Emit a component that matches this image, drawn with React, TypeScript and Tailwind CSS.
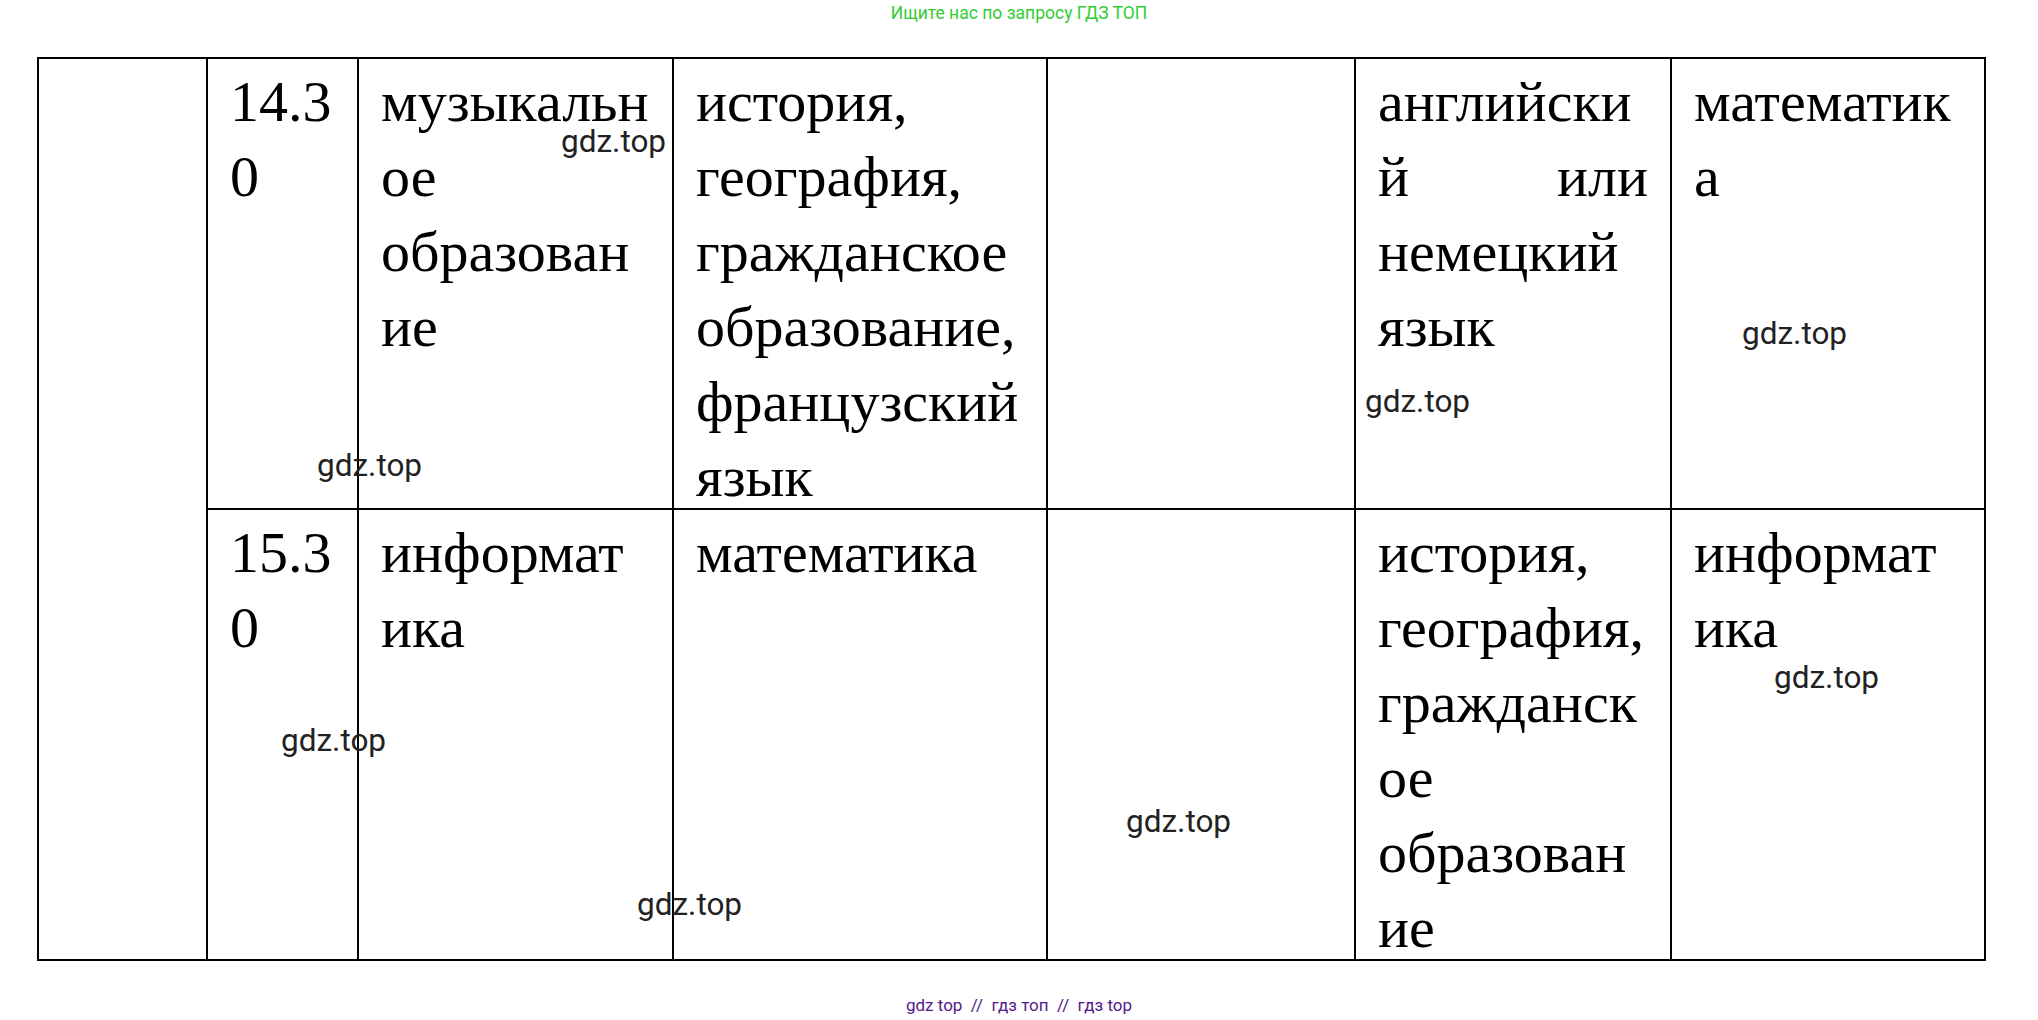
import React from "react";

const td =
  "border-2 border-black align-top px-[22px] pt-[5px] pb-0 text-justify [overflow-wrap:anywhere]";

const wm =
  "absolute text-[31.5px] leading-[31px] text-[#222] font-['Roboto',sans-serif] pointer-events-none";

function Cell({ children }: { children?: React.ReactNode }) {
  return (
    <td className={td}>
      <div className="-mb-[6px]">{children}</div>
    </td>
  );
}

export default function App() {
  return (
    <div className="relative w-[2038px] h-[1020px] bg-white overflow-hidden">
      <div className="h-[20px] pt-[3px] text-center text-[17.5px] leading-[20px] text-[#33cc33] font-['Roboto',sans-serif]">
        Ищите нас по запросу ГДЗ ТОП
      </div>
      <div className="mt-[37px] ml-[37px]">
        <table className="table-fixed border-collapse border-2 border-black w-[1947px] font-['Liberation_Serif','Times_New_Roman',serif] text-[58px] leading-[75px] text-black">
          <colgroup>
            <col className="w-[169px]" />
            <col className="w-[151px]" />
            <col className="w-[315px]" />
            <col className="w-[374px]" />
            <col className="w-[308px]" />
            <col className="w-[316px]" />
            <col className="w-[314px]" />
          </colgroup>
          <tbody>
            <tr>
              <td rowSpan={2} className={td}></td>
              <Cell>14.30</Cell>
              <Cell>музыкальное образование</Cell>
              <Cell>история, география, гражданское образование, французский язык</Cell>
              <Cell />
              <Cell>английский или немецкий язык</Cell>
              <Cell>математика</Cell>
            </tr>
            <tr>
              <Cell>15.30</Cell>
              <Cell>информатика</Cell>
              <Cell>математика</Cell>
              <Cell />
              <Cell>история, география, гражданское образование</Cell>
              <Cell>информатика</Cell>
            </tr>
          </tbody>
        </table>
      </div>
      <div className="mt-[34px] text-center text-[17px] leading-[20px] text-[#551a8b] font-['Roboto',sans-serif] whitespace-pre">
        {"gdz top  //  гдз топ  //  гдз top"}
      </div>

      <div className={`${wm} left-[561px] top-[126px]`}>gdz.top</div>
      <div className={`${wm} left-[317px] top-[450px]`}>gdz.top</div>
      <div className={`${wm} left-[1742px] top-[318px]`}>gdz.top</div>
      <div className={`${wm} left-[1365px] top-[386px]`}>gdz.top</div>
      <div className={`${wm} left-[281px] top-[725px]`}>gdz.top</div>
      <div className={`${wm} left-[1774px] top-[662px]`}>gdz.top</div>
      <div className={`${wm} left-[1126px] top-[806px]`}>gdz.top</div>
      <div className={`${wm} left-[637px] top-[889px]`}>gdz.top</div>
    </div>
  );
}
